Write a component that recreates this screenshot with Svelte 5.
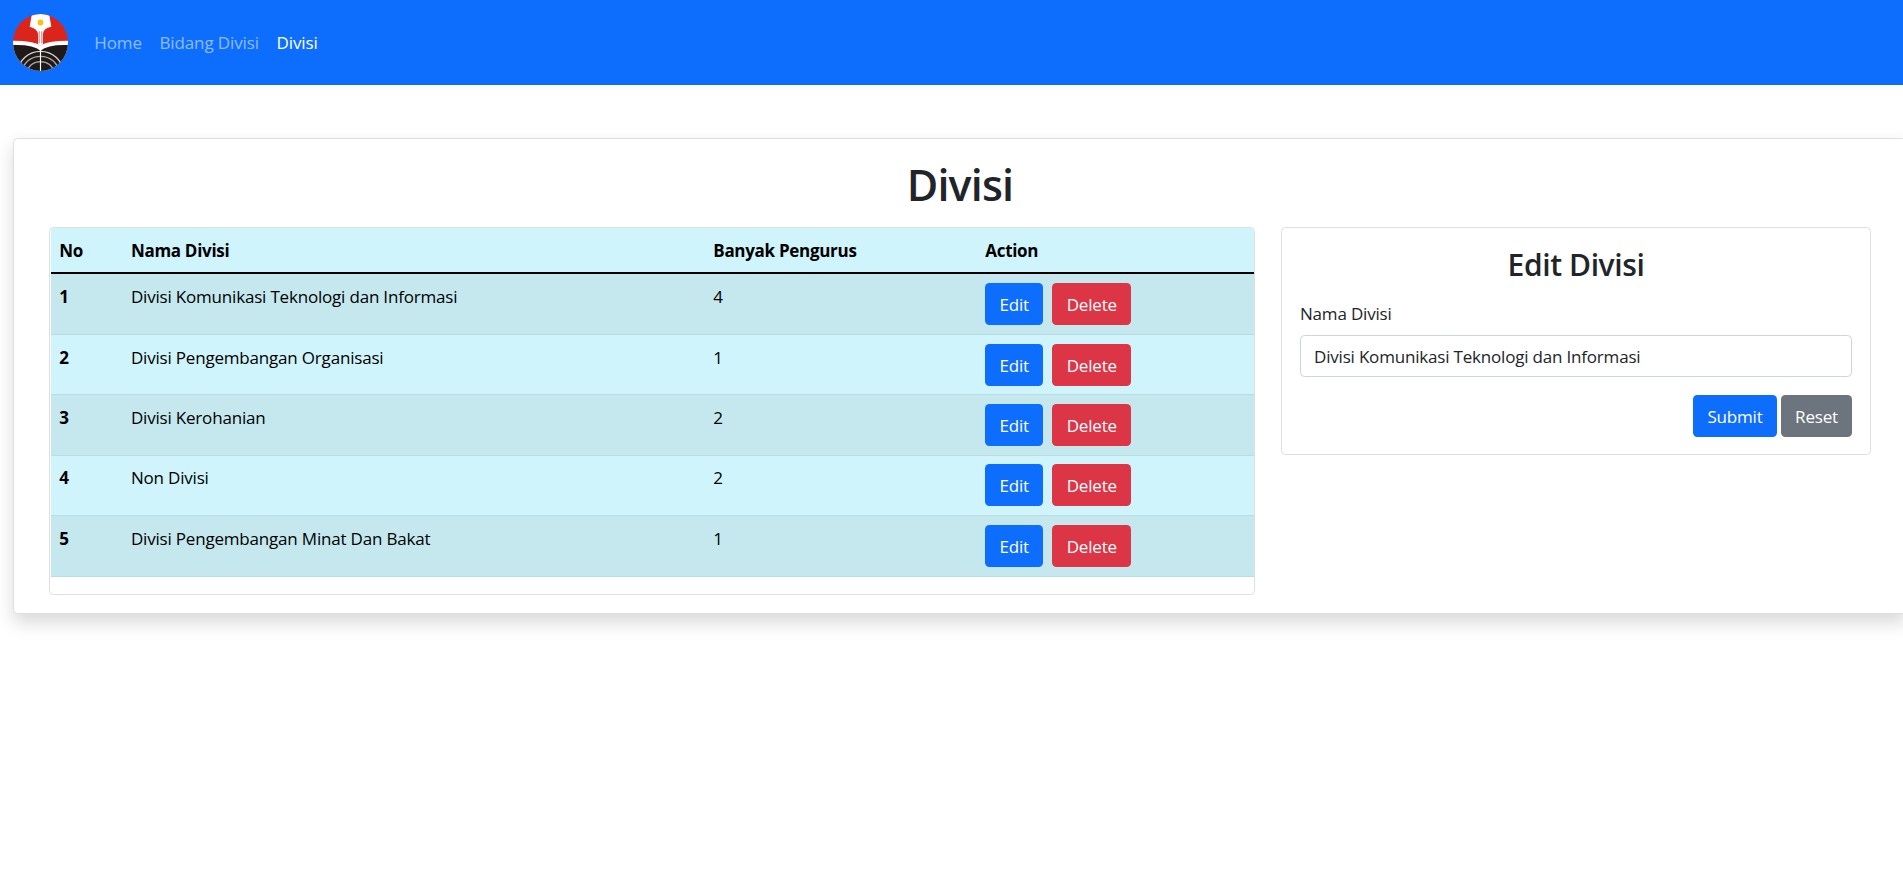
<script>
  const links = [
    { label: 'Home', active: false },
    { label: 'Bidang Divisi', active: false },
    { label: 'Divisi', active: true }
  ];

  const rows = [
    { nama: 'Divisi Komunikasi Teknologi dan Informasi', jumlah: 4 },
    { nama: 'Divisi Pengembangan Organisasi', jumlah: 1 },
    { nama: 'Divisi Kerohanian', jumlah: 2 },
    { nama: 'Non Divisi', jumlah: 2 },
    { nama: 'Divisi Pengembangan Minat Dan Bakat', jumlah: 1 }
  ];

  let nama = $state(rows[0].nama);
</script>

<nav class="navbar">
  <svg class="logo" viewBox="39 42 165 171" preserveAspectRatio="none" aria-hidden="true">
    <clipPath id="disc"><ellipse cx="121.5" cy="127.5" rx="82.5" ry="85.5" /></clipPath>
    <g clip-path="url(#disc)">
      <rect x="39" y="42" width="165" height="171" fill="#da251d" />
      <path d="M39 122 Q102 122 121.500 137 Q141 122 204 122 V213 H39Z" fill="#fff" />
      <path d="M39 135 Q100 133 121.500 152 Q143 133 204 135 V213 H39Z" fill="#1f1a17" />
      <g fill="none" stroke="#d6d5d4" stroke-width="4">
        <ellipse cx="121.500" cy="214" rx="66" ry="60" />
        <ellipse cx="121.500" cy="214" rx="53" ry="45" stroke="#aaa8a7" />
        <ellipse cx="121.500" cy="214" rx="38" ry="29" stroke="#aaa8a7" />
      </g>
      <path d="M121.500 150V213" stroke="#fff" stroke-width="3.500" />
      <path d="M95 46 Q121 38 148 46 L154 80 Q130 85 129 101 V132 L121.500 138 L114 132 V101 Q112 86 89 80Z" fill="#fff" />
      <path d="M117.500 94V130M125.500 94V130" stroke="#da251d" stroke-width="2" />
      <circle cx="121.500" cy="67.500" r="8.700" fill="#f9c20a" />
    </g>
  </svg>
  <ul>
    {#each links as link}
      <li class:active={link.active}>{link.label}</li>
    {/each}
  </ul>
</nav>

<main class="card page">
  <h1>Divisi</h1>
  <div class="columns">
    <section class="card list">
      <div class="row head">
        <b>No</b><b>Nama Divisi</b><b>Banyak Pengurus</b><b>Action</b>
      </div>
      {#each rows as row, i}
        <div class="row item">
          <b>{i + 1}</b>
          <span>{row.nama}</span>
          <span>{row.jumlah}</span>
          <div class="actions">
            <button class="primary edit">Edit</button>
            <button class="danger">Delete</button>
          </div>
        </div>
      {/each}
    </section>

    <section class="card form">
      <h2>Edit Divisi</h2>
      <label for="nama">Nama Divisi</label>
      <input id="nama" type="text" bind:value={nama} />
      <div class="buttons">
        <button class="primary submit">Submit</button>
        <button class="secondary">Reset</button>
      </div>
    </section>
  </div>
</main>

<style>
  :global(body) {
    margin: 0;
    min-height: 100vh;
    overflow: hidden;
    background: #fff;
    color: #212529;
    font: 400 17px/26px 'Open Sans', 'Noto Sans', sans-serif;
    letter-spacing: -0.19px;
  }

  :global(#app) {
    min-height: 100vh;
  }

  * { box-sizing: border-box; }

  .navbar {
    display: flex;
    align-items: center;
    height: 85px;
    padding-left: 13px;
    background: #0d6efd;
  }

  .logo { width: 55px; height: 57px; }

  ul {
    display: flex;
    gap: 17.6px;
    margin: 0 0 0 26.300px;
    padding: 0;
    list-style: none;
    letter-spacing: -0.12px;
  }

  li { color: rgba(255, 255, 255, 0.55); }
  li.active { color: #fff; }

  .card {
    border: 1px solid #dfdfdf;
    border-radius: 4.4px;
    background: #fff;
  }

  .page {
    width: 1894px;
    height: 476px;
    margin: 53px 0 0 13px;
    padding: 19px 35px 0;
    box-shadow: 0 8.8px 17.6px rgba(0, 0, 0, 0.15);
  }

  h1 {
    margin: 0;
    font-size: 43px;
    font-weight: 600;
    line-height: 54px;
    letter-spacing: -0.8px;
    text-align: center;
  }

  .columns {
    display: flex;
    align-items: flex-start;
    gap: 26px;
    padding-top: 15px;
  }

  .list {
    width: 1206px;
    height: 368px;
    padding-left: 1px;
    overflow: hidden;
    color: #000;
  }

  .row {
    display: grid;
    grid-template-columns: 71.600px 582.400px 272px 1fr;
    padding: 9px 8.300px 0;
    border-bottom: 1px solid #badce3;
  }

  .row b { font-weight: 700; letter-spacing: -0.3px; }

  .row b,
  .row span { line-height: 28px; }

  .head {
    height: 46px;
    border-bottom: 2px solid #000;
    background: #cff4fc;
  }

  .item { height: 60px; background: #cff4fc; }
  .item:nth-child(even) { height: 61px; background: #c5e8ef; }
  .item:nth-child(5) { padding-top: 8px; }

  .actions { display: flex; gap: 9px; }

  button {
    height: 42px;
    padding: 1px 0 0;
    border: 0;
    border-radius: 4.4px;
    color: #fff;
    font: inherit;
    letter-spacing: inherit;
  }

  .primary { background: #0d6efd; }
  .danger { width: 79px; background: #dc3545; }
  .secondary { width: 71px; background: #6c757d; }
  .edit { width: 58px; }
  .submit { width: 84px; }

  .form {
    display: flex;
    flex-direction: column;
    width: 590px;
    height: 228px;
    padding: 18px 18px 0;
  }

  h2 {
    margin: 0 0 17px;
    font-size: 30px;
    font-weight: 600;
    line-height: 38px;
    letter-spacing: -0.4px;
    text-align: center;
  }

  label { margin-bottom: 8px; height: 26px; }

  input {
    height: 42px;
    padding: 0 13px;
    border: 1px solid #ced4da;
    border-radius: 4.4px;
    background: #fff;
    color: #212529;
    font: inherit;
    letter-spacing: inherit;
  }

  .buttons {
    display: flex;
    justify-content: flex-end;
    gap: 4px;
    margin-top: 18px;
  }
</style>
